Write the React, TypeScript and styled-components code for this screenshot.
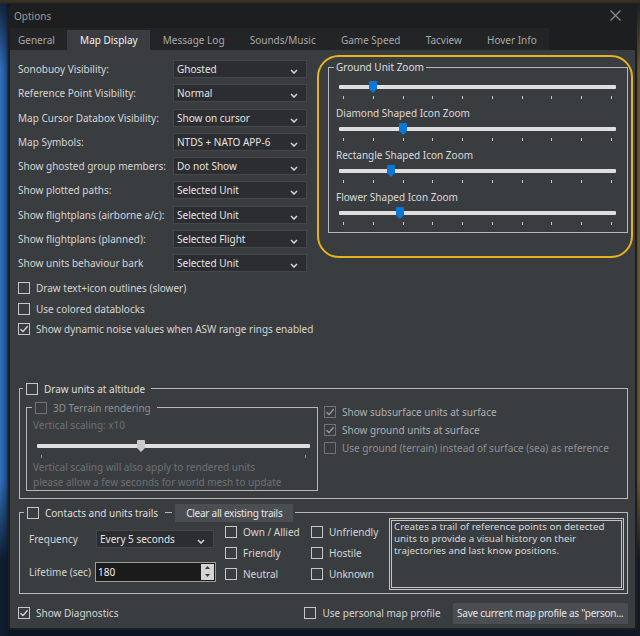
import React from 'react';
import styled, { createGlobalStyle } from 'styled-components';

const FONT = `"Noto Sans", "Open Sans", "DejaVu Sans", sans-serif`;

const Global = createGlobalStyle`
  html, body { margin: 0; padding: 0; }
  body {
    width: 640px;
    height: 636px;
    overflow: hidden;
    font-family: ${FONT};
    font-size: 10px;
    background:
      linear-gradient(180deg, #3d3422 0px, #2c2a22 3px, rgba(0,0,0,0) 4px),
      linear-gradient(180deg, rgba(11,20,34,0.85) 0px, rgba(11,20,34,0) 70px, rgba(11,20,34,0) 480px, rgba(11,20,34,0.9) 560px),
      linear-gradient(90deg, #3573bb 0px, #1f5295 6px, #0d1b2e 9px, #0b1422 560px, #3c3120 632px, #6d5a2e 640px);
  }
`;

const Desktop = styled.div`
  width: 640px;
  height: 636px;
  box-sizing: border-box;
  padding: 3px 3px 6px 8px;
  display: flex;
`;

const Window = styled.div`
  flex: 1;
  display: flex;
  flex-direction: column;
  background: #1d1e1f;
  border-radius: 7px 7px 3px 3px;
  overflow: hidden;
`;

const TitleBar = styled.div`
  height: 25px;
  flex-shrink: 0;
  display: flex;
  align-items: center;
  justify-content: space-between;
  padding: 0 16px 0 6px;
  color: #9c9c9c;
  font-size: 10px;
`;

const TabBar = styled.div`
  height: 22px;
  flex-shrink: 0;
  display: flex;
  align-items: flex-end;
  padding-left: 2px;
`;

const TabStrip = styled.div`
  display: flex;
  align-items: flex-end;
  height: 22px;
  background: #232425;
`;

const Tab = styled.div<{ $active?: boolean }>`
  height: 20px;
  display: flex;
  align-items: center;
  padding: 0 12.6px;
  color: ${(p) => (p.$active ? '#f2f2f2' : '#a9a9a9')};
  background: ${(p) => (p.$active ? '#3a3c3f' : 'transparent')};
  white-space: nowrap;
  &:first-child { padding-left: 8px; }
`;

const Content = styled.div`
  flex: 1;
  margin: 0 2px 2px 2px;
  background: #3a3d40;
  padding: 10px 7px 0 8px;
  display: flex;
  flex-direction: column;
`;

const Top = styled.div`
  display: flex;
  align-items: flex-start;
  gap: 10px;
`;

const LeftCol = styled.div`
  width: 289px;
  display: flex;
  flex-direction: column;
  flex-shrink: 0;
`;

const FormGrid = styled.div`
  display: grid;
  grid-template-columns: 155px 134px;
  row-gap: 6.25px;
  align-items: center;
`;

const Label = styled.div`
  color: #d5d5d5;
  line-height: 14px;
  white-space: nowrap;
`;

const SelectBox = styled.div<{ $w?: number }>`
  height: 18px;
  box-sizing: border-box;
  width: ${(p) => (p.$w ? `${p.$w}px` : 'auto')};
  background: #2b2d30;
  border: 1px solid #45484b;
  display: flex;
  align-items: center;
  justify-content: space-between;
  padding: 0 8px 0 3px;
  color: #e4e4e4;
  white-space: nowrap;
`;

const Chevron = styled.svg`
  width: 8px;
  height: 5px;
  margin-top: 5px;
  flex-shrink: 0;
`;

const CheckList = styled.div`
  display: flex;
  flex-direction: column;
  margin-top: 6px;
`;

const CheckRow = styled.div<{ $h?: number; $color?: string }>`
  display: flex;
  align-items: center;
  gap: 6px;
  height: ${(p) => p.$h ?? 20.5}px;
  color: ${(p) => p.$color ?? '#d5d5d5'};
  white-space: nowrap;
`;

const Box = styled.span<{ $dim?: boolean }>`
  width: 12px;
  height: 12px;
  box-sizing: border-box;
  border: 1px solid ${(p) => (p.$dim ? '#707274' : '#c6c6c6')};
  display: inline-flex;
  align-items: center;
  justify-content: center;
  flex-shrink: 0;
`;

const Highlight = styled.div`
  margin-top: -5px;
  margin-right: -5px;
  width: 316px;
  flex-shrink: 0;
  box-sizing: border-box;
  border: 2px solid #e6b31e;
  border-radius: 22px;
  padding: 3px 3px 23px 8px;
`;

const Group = styled.fieldset<{ $mt?: number; $w?: number }>`
  margin: ${(p) => p.$mt ?? 0}px 0 0 1px;
  padding: 0;
  border: 1px solid #b8b8b8;
  min-width: 0;
  ${(p) => (p.$w ? `width: ${p.$w}px; box-sizing: border-box; flex-shrink: 0;` : '')}
`;

const Legend = styled.legend<{ $ml?: number; $pr?: number; $color?: string }>`
  margin-left: ${(p) => p.$ml ?? 5}px;
  padding: 0 ${(p) => p.$pr ?? 2}px 0 ${(p) => (p.$ml === undefined ? 2 : 3)}px;
  line-height: 14px;
  color: ${(p) => p.$color ?? '#dedede'};
  display: flex;
  align-items: center;
  gap: 6px;
  white-space: nowrap;
`;

const ZoomBody = styled.div`
  padding: 4px 8px 0 7px;
`;

const SliderLabel = styled.div`
  color: #dadada;
  line-height: 14px;
  white-space: nowrap;
`;

const SliderArea = styled.div<{ $mt: number; $mb: number; $ml?: number; $mr?: number }>`
  position: relative;
  margin: ${(p) => p.$mt}px ${(p) => p.$mr ?? 3}px ${(p) => p.$mb}px ${(p) => p.$ml ?? 3}px;
`;

const Track = styled.div`
  height: 4px;
  background: #dedede;
  border-radius: 1px;
`;

const Ticks = styled.div`
  display: flex;
  justify-content: space-between;
  height: 3px;
  padding: 0 4px;
  margin-top: 7px;
`;

const Tick = styled.div<{ $dim?: boolean }>`
  display: block;
  flex: 0 0 1px;
  width: 1px;
  height: 3px;
  background: ${(p) => (p.$dim ? '#909294' : '#c9c9c9')};
`;

const Thumb = styled.svg`
  position: absolute;
  top: -4px;
  width: 8px;
  height: 12px;
  margin-left: -4px;
`;

const AltBody = styled.div`
  display: flex;
  gap: 6px;
  padding: 0 0 7px 5px;
`;

const TerrainBody = styled.div`
  padding: 3px 7px 0 6px;
`;

const DimText = styled.div<{ $lh?: number }>`
  color: #6e7173;
  line-height: ${(p) => p.$lh ?? 14}px;
  white-space: nowrap;
`;

const AltChecks = styled.div`
  padding-top: 7px;
  display: flex;
  flex-direction: column;
`;

const Dash = styled.span`
  width: 7px;
  height: 1px;
  background: #b8b8b8;
  margin: 0 -3px 0 1px;
`;

const Button = styled.div<{ $h?: number; $px?: number }>`
  height: ${(p) => p.$h ?? 18}px;
  display: flex;
  align-items: center;
  padding: 0 ${(p) => p.$px ?? 6}px;
  background: #4a4d51;
  color: #e6e6e6;
  letter-spacing: -0.25px;
  white-space: nowrap;
`;

const ContactsBody = styled.div`
  display: flex;
  align-items: flex-start;
  padding: 0 3px 3px 9px;
`;

const TrailForm = styled.div`
  display: grid;
  grid-template-columns: 67px 120px;
  align-items: center;
  row-gap: 14px;
  margin-top: 8px;
`;

const NumberBox = styled.div`
  height: 20px;
  box-sizing: border-box;
  margin-left: -1px;
  background: #1b1b1c;
  border: 1px solid #9b9b9b;
  display: flex;
  align-items: stretch;
  color: #f2f2f2;
`;

const NumberText = styled.div`
  flex: 1;
  display: flex;
  align-items: center;
  padding-left: 2px;
`;

const Spinner = styled.div`
  width: 13px;
  display: flex;
  flex-direction: column;
  background: #d4d4d4;
  margin: 1px;
`;

const SpinHalf = styled.div`
  flex: 1;
  display: flex;
  align-items: center;
  justify-content: center;
`;

const ChecksGrid = styled.div`
  display: grid;
  grid-template-columns: 86px 78px;
  grid-auto-rows: 21px;
  margin-left: 9px;
`;

const Description = styled.div`
  flex: 1;
  margin-top: -4px;
  height: 72px;
  box-sizing: border-box;
  border: 3px double #c4c4c4;
  padding: 0 2px;
  color: #d9d9d9;
  font-size: 9.8px;
  line-height: 12px;
`;

const DescLine = styled.div`
  white-space: nowrap;
  height: 12px;
`;

const Footer = styled.div`
  display: flex;
  align-items: center;
  margin-top: 9px;
`;

const FooterRight = styled.div`
  margin-left: auto;
  display: flex;
  align-items: center;
  gap: 12px;
`;

const Check = ({ checked, dim }: { checked?: boolean; dim?: boolean }) => (
  <Box $dim={dim}>
    {checked && (
      <svg width="10" height="10" viewBox="0 0 10 10">
        <polyline
          points="1.5,5.2 4,7.6 8.6,2.2"
          fill="none"
          stroke={dim ? '#9a9c9e' : '#d8d8d8'}
          strokeWidth="1.4"
        />
      </svg>
    )}
  </Box>
);

const Select = ({ value, w }: { value: string; w?: number }) => (
  <SelectBox $w={w}>
    <span>{value}</span>
    <Chevron viewBox="0 0 8 5">
      <polyline points="1,1 4,4 7,1" fill="none" stroke="#d2d2d2" strokeWidth="1.6" />
    </Chevron>
  </SelectBox>
);

const Slider = ({
  frac,
  ticks,
  mt,
  mb,
  ml,
  mr,
  dim,
}: {
  frac: number;
  ticks: number;
  mt: number;
  mb: number;
  ml?: number;
  mr?: number;
  dim?: boolean;
}) => (
  <SliderArea $mt={mt} $mb={mb} $ml={ml} $mr={mr}>
    <Track />
    <Thumb viewBox="0 0 8 12" style={{ left: `calc(4.5px + ${frac} * (100% - 9px))` }}>
      <path d="M1 0 H7 Q8 0 8 1 V8 L4 12 L0 8 V1 Q0 0 1 0 Z" fill={dim ? '#c9c9c9' : '#0a78d6'} />
    </Thumb>
    <Ticks>
      {Array.from({ length: ticks }).map((_, i) => (
        <Tick key={i} $dim={dim} />
      ))}
    </Ticks>
  </SliderArea>
);

const rows: [string, string][] = [
  ['Sonobuoy Visibility:', 'Ghosted'],
  ['Reference Point Visibility:', 'Normal'],
  ['Map Cursor Databox Visibility:', 'Show on cursor'],
  ['Map Symbols:', 'NTDS + NATO APP-6'],
  ['Show ghosted group members:', 'Do not Show'],
  ['Show plotted paths:', 'Selected Unit'],
  ['Show flightplans (airborne a/c):', 'Selected Unit'],
  ['Show flightplans (planned):', 'Selected Flight'],
  ['Show units behaviour bark', 'Selected Unit'],
];

const zooms: [string, number][] = [
  ['Diamond Shaped Icon Zoom', 0.222],
  ['Rectangle Shaped Icon Zoom', 0.178],
  ['Flower Shaped Icon Zoom', 0.211],
];

const tabs = ['General', 'Map Display', 'Message Log', 'Sounds/Music', 'Game Speed', 'Tacview', 'Hover Info'];

export default function App() {
  return (
    <>
      <Global />
      <Desktop>
        <Window>
          <TitleBar>
            <span>Options</span>
            <svg width="11" height="11" viewBox="0 0 11 11">
              <path d="M0.5 0.5 L10.5 10.5 M10.5 0.5 L0.5 10.5" stroke="#8e8e8e" strokeWidth="1.2" />
            </svg>
          </TitleBar>
          <TabBar>
            <TabStrip>
              {tabs.map((t) => (
                <Tab key={t} $active={t === 'Map Display'}>
                  {t}
                </Tab>
              ))}
            </TabStrip>
          </TabBar>
          <Content>
            <Top>
              <LeftCol>
                <FormGrid>
                  {rows.map(([l, v], i) => (
                    <React.Fragment key={i}>
                      <Label>{l}</Label>
                      <Select value={v} />
                    </React.Fragment>
                  ))}
                </FormGrid>
                <CheckList>
                  <CheckRow>
                    <Check />
                    Draw text+icon outlines (slower)
                  </CheckRow>
                  <CheckRow>
                    <Check />
                    Use colored datablocks
                  </CheckRow>
                  <CheckRow>
                    <Check checked />
                    Show dynamic noise values when ASW range rings enabled
                  </CheckRow>
                </CheckList>
              </LeftCol>
              <Highlight>
                <Group>
                  <Legend>Ground Unit Zoom</Legend>
                  <ZoomBody>
                    <Slider frac={0.111} ticks={10} mt={7} mb={7} />
                    {zooms.map(([l, f]) => (
                      <React.Fragment key={l}>
                        <SliderLabel>{l}</SliderLabel>
                        <Slider frac={f} ticks={10} mt={7} mb={7} />
                      </React.Fragment>
                    ))}
                  </ZoomBody>
                </Group>
              </Highlight>
            </Top>

            <Group $mt={42}>
              <Legend $ml={3} $pr={6}>
                <Check />
                Draw units at altitude
              </Legend>
              <AltBody>
                <Group $mt={5} $w={292}>
                  <Legend $ml={5} $pr={6} $color="#8e9092">
                    <Check dim />
                    3D Terrain rendering
                  </Legend>
                  <TerrainBody>
                    <DimText>Vertical scaling: x10</DimText>
                    <Slider frac={0.375} ticks={2} mt={12} mb={2} ml={4} mr={0} dim />
                    <DimText $lh={15}>
                      Vertical scaling will also apply to rendered units
                      <br />
                      please allow a few seconds for world mesh to update
                    </DimText>
                  </TerrainBody>
                </Group>
                <AltChecks>
                  <CheckRow $h={18} $color="#aeb0b2">
                    <Check checked dim />
                    Show subsurface units at surface
                  </CheckRow>
                  <CheckRow $h={18} $color="#aeb0b2">
                    <Check checked dim />
                    Show ground units at surface
                  </CheckRow>
                  <CheckRow $h={18} $color="#8f9193">
                    <Check dim />
                    Use ground (terrain) instead of surface (sea) as reference
                  </CheckRow>
                </AltChecks>
              </AltBody>
            </Group>

            <Group $mt={5}>
              <Legend $ml={4} $pr={2}>
                <Check />
                <span>Contacts and units trails</span>
                <Dash />
                <Button $px={11}>Clear all existing trails</Button>
              </Legend>
              <ContactsBody>
                <TrailForm>
                  <Label>Frequency</Label>
                  <Select value="Every 5 seconds" w={118} />
                  <Label>Lifetime (sec)</Label>
                  <NumberBox>
                    <NumberText>180</NumberText>
                    <Spinner>
                      <SpinHalf>
                        <svg width="5" height="3" viewBox="0 0 5 3">
                          <polygon points="0,3 2.5,0 5,3" fill="#3a3a3a" />
                        </svg>
                      </SpinHalf>
                      <SpinHalf>
                        <svg width="5" height="3" viewBox="0 0 5 3">
                          <polygon points="0,0 2.5,3 5,0" fill="#3a3a3a" />
                        </svg>
                      </SpinHalf>
                    </Spinner>
                  </NumberBox>
                </TrailForm>
                <ChecksGrid>
                  <CheckRow $h={21}>
                    <Check />
                    Own / Allied
                  </CheckRow>
                  <CheckRow $h={21}>
                    <Check />
                    Unfriendly
                  </CheckRow>
                  <CheckRow $h={21}>
                    <Check />
                    Friendly
                  </CheckRow>
                  <CheckRow $h={21}>
                    <Check />
                    Hostile
                  </CheckRow>
                  <CheckRow $h={21}>
                    <Check />
                    Neutral
                  </CheckRow>
                  <CheckRow $h={21}>
                    <Check />
                    Unknown
                  </CheckRow>
                </ChecksGrid>
                <Description>
                  <DescLine>Creates a trail of reference points on detected</DescLine>
                  <DescLine>units to provide a visual history on their</DescLine>
                  <DescLine>trajectories and last know positions.</DescLine>
                </Description>
              </ContactsBody>
            </Group>

            <Footer>
              <CheckRow $h={21}>
                <Check checked />
                Show Diagnostics
              </CheckRow>
              <FooterRight>
                <CheckRow $h={21}>
                  <Check />
                  Use personal map profile
                </CheckRow>
                <Button $h={21} $px={4.5}>Save current map profile as "person...</Button>
              </FooterRight>
            </Footer>
          </Content>
        </Window>
      </Desktop>
    </>
  );
}
